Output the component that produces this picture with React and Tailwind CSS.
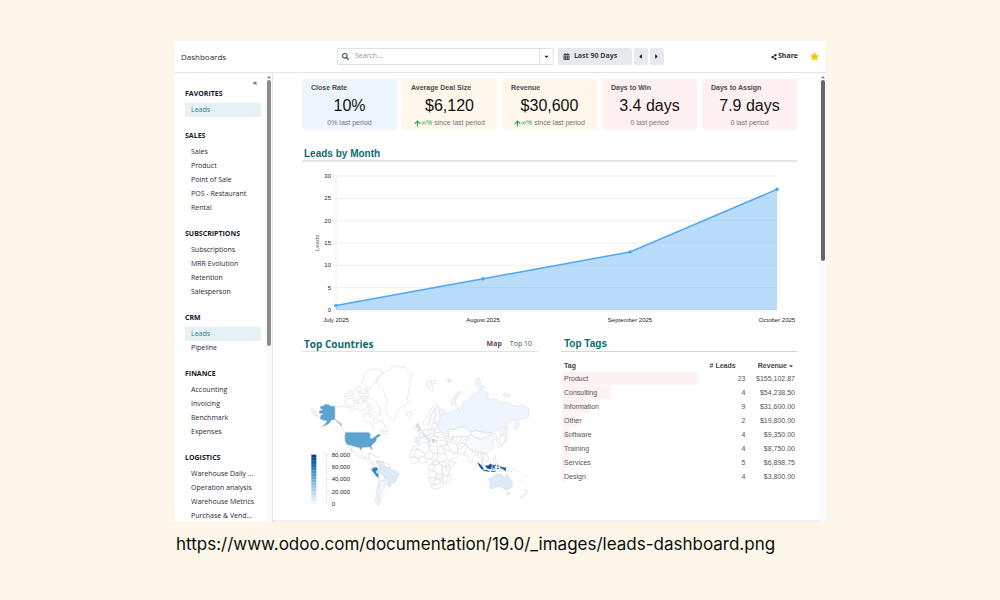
import { FaArrowUp, FaCalendarAlt, FaCaretDown, FaCaretLeft, FaCaretRight, FaCaretUp, FaSearch, FaShareAlt, FaStar } from 'react-icons/fa';
import clsx from 'clsx';

const SECTIONS = [
  { title: 'FAVORITES', items: ['Leads'], active: 'Leads' },
  { title: 'SALES', items: ['Sales', 'Product', 'Point of Sale', 'POS - Restaurant', 'Rental'] },
  { title: 'SUBSCRIPTIONS', items: ['Subscriptions', 'MRR Evolution', 'Retention', 'Salesperson'] },
  { title: 'CRM', items: ['Leads', 'Pipeline'], active: 'Leads' },
  { title: 'FINANCE', items: ['Accounting', 'Invoicing', 'Benchmark', 'Expenses'] },
  { title: 'LOGISTICS', items: ['Warehouse Daily ...', 'Operation analysis', 'Warehouse Metrics', 'Purchase & Vend...'] },
];

const CARDS = [
  { label: 'Close Rate', value: '10%', note: '0% last period', bg: 'bg-[#eef5ff]' },
  { label: 'Average Deal Size', value: '$6,120', note: 'since last period', up: true, bg: 'bg-[#fff6ec]' },
  { label: 'Revenue', value: '$30,600', note: 'since last period', up: true, bg: 'bg-[#fff6ec]' },
  { label: 'Days to Win', value: '3.4 days', note: '0 last period', bg: 'bg-[#fff1f1]' },
  { label: 'Days to Assign', value: '7.9 days', note: '0 last period', bg: 'bg-[#fff1f1]' },
];

const TAGS = [
  { tag: 'Product', leads: 23, revenue: 155102.87 },
  { tag: 'Consulting', leads: 4, revenue: 54238.5 },
  { tag: 'Information', leads: 9, revenue: 31600 },
  { tag: 'Other', leads: 2, revenue: 19800 },
  { tag: 'Software', leads: 4, revenue: 9350 },
  { tag: 'Training', leads: 4, revenue: 8750 },
  { tag: 'Services', leads: 5, revenue: 6898.75 },
  { tag: 'Design', leads: 4, revenue: 3800 },
];

const MONTHS = [
  { label: 'July 2025', x: 34, leads: 1 },
  { label: 'August 2025', x: 181, leads: 7 },
  { label: 'September 2025', x: 328, leads: 13 },
  { label: 'October 2025', x: 475, leads: 27 },
];

const SCALE = [
  '#0a3f86', '#08519c', '#1660a8', '#2070b4', '#2f7fbc', '#4090c5', '#509bcb', '#60a6d1',
  '#75b2d8', '#8abfdd', '#9fcae1', '#b2d2e8', '#c4daee', '#d3e3f3', '#e2edf8', '#f2f7fd',
];

const LEGEND = ['80,000', '60,000', '40,000', '20,000', '0'];

// Countries without revenue, outline only
const OUTLINES = [
  // Canada
  'M105 229L120 232L128 228L137 232L150 233L158 238L170 236L182 243L193 240L199 230L206 227L209 236L204 246L193 252L189 262L191 270L202 276L211 279L214 290L219 297L222 290L219 281L224 273L218 265L228 263L235 269L240 276L246 270L252 284L259 290L252 296L244 299L240 304L247 303L252 306L247 311L241 318L238 312L222 322L214 326L210 322L212 312L205 307L136 307L129 300L124 288L113 275L105 269Z',
  'M246 306L252 309L260 312L266 308L262 300L258 303Z',
  // Canadian arctic
  'M190 150L194 131L206 121L225 117L243 119L249 127L240 134L232 145L224 158L218 170L206 176L197 170L190 164L184 157Z',
  'M134 213L142 203L152 207L162 202L172 208L174 220L166 230L152 228L138 224Z',
  'M146 188L156 183L164 190L156 197L147 196Z',
  'M166 176L177 168L187 176L180 183L168 183Z',
  'M172 190L183 186L192 192L205 188L207 198L194 200L180 199Z',
  'M176 207L186 203L190 214L184 224L176 219Z',
  'M197 206L206 202L217 208L228 218L236 229L243 238L238 246L242 256L232 254L222 245L211 240L220 234L213 224L203 219Z',
  'M202 252L210 247L217 254L211 261Z',
  'M190 206L198 203L195 216L190 214Z',
  'M160 214L167 211L169 219L162 221Z',
  'M192 176L203 178L205 184L194 184Z',
  'M138 190L132 200L141 199Z',
  // Greenland and Iceland
  'M230 151L239 144L244 134L255 124L270 121L274 112L290 107L304 112L317 112L328 122L337 131L336 142L329 149L331 166L325 179L328 190L320 202L325 214L318 226L304 230L295 240L287 250L285 264L280 271L270 263L262 254L257 240L258 226L264 215L257 204L253 192L250 178L240 170L233 162Z',
  'M317 250L325 246L335 248L336 254L326 259L319 256Z',
  // Svalbard
  'M380 156L390 153L394 165L402 170L397 184L389 180L382 168Z',
  'M394 152L409 152L405 161L397 162Z',
  // Mexico and Central America
  'M141 344L150 346L168 351L176 355L184 362L186 375L193 381L202 374L208 375L205 384L199 387L186 383L173 377L165 369L160 362L152 352L158 368L149 357Z',
  'M193 381L202 385L211 388L215 397L222 401L228 398L227 404L219 405L208 397L197 388Z',
  'M205 371L213 370L224 375L218 377Z',
  'M226 378L236 379L233 384L225 382Z',
  // Colombia, Ecuador, Bolivia, Guyanas
  'M221 401L230 392L231 401L239 407L237 418L229 418L220 411Z',
  'M217 412L224 413L219 420L215 418Z',
  'M236 427L246 431L254 440L252 450L241 453L236 443Z',
  'M251 398L266 403L271 411L262 413L253 409Z',
  'M249 452L258 451L263 461L255 463Z',
  // Scandinavia
  'M370 284L370 274L378 265L386 254L392 240L399 229L408 224L417 228L413 235L406 232L398 246L391 259L387 272L385 283L377 288Z',
  'M386 284L390 268L397 252L403 240L407 236L410 246L404 259L400 272L403 279L396 290L392 296Z',
  'M407 236L416 232L417 246L421 261L415 274L405 277L402 268L409 256Z',
  // British Isles, Iberia
  'M343 287L350 284L349 294L342 295Z',
  'M345 321L352 323L352 338L345 337Z',
  // Central Europe
  'M372 301L383 297L387 308L382 318L371 314Z',
  'M386 299L401 298L403 309L393 313L386 308Z',
  'M371 314L382 318L392 313L403 309L402 319L388 323L376 322Z',
  'M402 296L414 292L422 301L418 308L403 309Z',
  'M404 309L419 307L433 312L437 319L425 323L415 321L404 317Z',
  'M397 281L408 279L413 291L402 296L396 290Z',
  'M390 322L402 319L413 321L412 331L402 333L393 329Z',
  'M364 301L371 302L370 309L363 307Z',
  'M402 333L411 331L407 338L402 340Z',
  // Turkey, Caucasus, Middle East
  'M410 334L425 331L441 335L441 344L424 346L411 343Z',
  'M433 326L442 325L456 333L450 339L440 334Z',
  'M423 346L436 345L432 355L424 358Z',
  'M436 345L443 344L452 359L446 363L432 356Z',
  'M441 335L450 337L458 340L470 342L473 356L475 370L461 368L452 359L443 345Z',
  'M423 358L432 356L446 363L457 369L468 374L462 386L445 395L439 386L431 371Z',
  'M457 369L469 371L474 376L462 388',
  // Central and South Asia
  'M444 306L450 297L466 299L479 292L492 291L503 299L515 305L506 318L493 321L479 319L465 321L457 318L456 330L449 322Z',
  'M456 321L466 322L479 332L489 338L481 341L464 334Z',
  'M479 320L493 322L506 319L499 328L488 331Z',
  'M472 341L482 341L490 338L496 342L488 352L482 358L473 356Z',
  'M473 356L482 358L491 348L497 343L502 353L494 366L488 373L475 370Z',
  'M502 351L512 360L523 364L534 366L535 374L524 376L518 388L513 400L507 393L502 379L492 374L494 366Z',
  'M512 358L526 363L525 367L513 363Z',
  'M511 306L524 302L539 305L556 309L570 307L575 314L559 322L544 327L527 322L516 315Z',
  'M534 366L540 364L544 373L548 383L546 390L540 384L535 376Z',
  'M544 371L553 372L559 380L564 391L558 395L550 386L548 379Z',
  'M546 389L550 401L554 410L549 405L544 391Z',
  'M553 372L561 371L565 383L568 390L563 397L556 390',
  'M583 376L588 380L586 388L591 397L585 399L579 388Z',
  'M588 402L593 405L588 409L583 406Z',
  'M539 404L548 402L553 409L548 411Z',
  // Japan and Korea
  'M590 326L599 325L600 336L597 346L592 343Z',
  'M620 319L618 332L614 341L604 347L596 351L606 343L613 333Z',
  'M610 311L620 313L616 320L610 318Z',
  // Africa
  'M340 352L350 344L357 342L354 352L344 359L333 366L333 360Z',
  'M357 342L373 337L385 337L386 347L390 359L376 372L363 363L350 355Z',
  'M385 337L391 337L391 347L387 352Z',
  'M389 347L404 349L413 350L413 371L401 369L389 360Z',
  'M413 350L428 351L436 371L413 371Z',
  'M413 371L436 371L441 383L434 394L419 396L410 389Z',
  'M401 369L413 372L410 389L402 394L393 388L398 378Z',
  'M376 372L389 361L401 369L398 379L393 386L381 386L375 381Z',
  'M350 357L363 364L374 373L371 380L357 384L344 382L343 372Z',
  'M333 366L343 360L350 359L343 372L344 382L331 381L330 373Z',
  'M331 381L344 382L356 385L356 397L345 400L337 396L331 388Z',
  'M356 385L368 381L376 382L380 386L378 397L367 399L356 397Z',
  'M380 386L393 387L401 391L396 402L386 403L379 397Z',
  'M396 402L402 394L411 391L417 399L404 405Z',
  'M417 396L434 395L443 397L449 405L438 410L427 407L419 403Z',
  'M434 394L441 384L448 395L457 398L468 394L463 406L451 416L447 408L449 404Z',
  'M387 404L398 404L406 405L405 414L397 421L388 417L384 411Z',
  'M405 405L419 402L427 407L425 420L427 433L416 433L408 427L397 423L405 414Z',
  'M427 408L438 410L438 420L447 427L446 437L432 436L427 426Z',
  'M438 410L449 407L450 417L445 425L438 420Z',
  'M386 423L398 423L408 427L409 435L405 445L386 443L388 433Z',
  'M409 433L425 433L428 440L417 447L409 445Z',
  'M428 438L446 437L446 448L435 456L437 464L430 461L427 447Z',
  'M386 443L405 445L410 448L402 451L401 466L393 463Z',
  'M402 451L412 447L421 455L413 463L401 463Z',
  'M417 447L428 446L429 455L421 456Z',
  'M393 463L401 466L414 463L424 456L430 461L425 470L414 476L402 478L395 473Z',
  'M446 434L453 437L451 449L443 458L438 456L441 445Z',
  // Papua and New Zealand
  'M617 412L628 414L636 425L626 422L617 422Z',
  'M637 416L646 420M650 423L656 428',
  'M675 477L684 485L679 493L675 488Z',
  'M676 494L668 503L661 503L669 495Z',
  'M666 449L671 454M658 453L662 456M676 438L681 440',
];

// Countries with revenue, shaded by amount
const SHADED = [
  // United States
  ['#5ba3d0', 'M136 307L205 307L212 312L210 322L214 326L222 322L230 315L238 311L241 318L231 324L228 334L220 342L214 349L217 361L212 356L209 351L198 352L187 353L183 361L178 353L168 351L150 346L141 344L135 333L134 318Z'],
  ['#5ba3d0', 'M105 229L92 227L84 223L74 223L70 228L62 228L59 235L68 239L58 242L57 250L69 252L61 257L60 267L69 271L80 273L75 282L64 291L81 285L90 278L94 271L105 269L113 275L119 283L125 290L123 281L114 273L105 268Z'],
  // Brazil and Venezuela
  ['#dce9f6', 'M229 420L238 416L239 407L252 408L262 413L270 411L275 420L288 422L299 431L292 443L288 455L276 460L270 472L261 465L264 457L255 446L253 438L244 431L234 429L228 426Z'],
  ['#dce9f6', 'M230 392L240 392L251 394L251 403L243 407L237 404L231 400Z'],
  // Argentina and Chile
  ['#f0f6fd', 'M240 454L249 452L258 461L252 466L256 474L247 481L246 492L241 501L241 515L234 511L236 490Z'],
  ['#f2f7fd', 'M236 442L240 454L235 480L234 510L241 521L234 528L226 515L229 490L233 466Z'],
  // Peru
  ['#3080bd', 'M215 416L224 412L230 411L235 418L229 423L229 429L236 431L236 443L230 440L222 430L215 421Z'],
  // Russia
  ['#eef5fe', 'M417 241L420 236L433 240L438 249L428 251L431 256L444 249L455 243L467 241L476 230L478 246L486 238L484 224L491 216L502 216L512 201L530 188L543 177L552 184L566 192L559 206L570 207L593 208L600 219L618 216L640 226L655 229L667 224L686 236L686 259L678 264L661 268L651 274L641 270L627 275L622 282L621 303L608 310L604 322L598 321L602 308L594 299L575 307L556 308L539 304L524 301L513 306L502 299L491 291L478 292L465 299L450 297L443 305L446 322L434 320L431 311L419 301L413 291L414 275L421 261Z'],
  ['#eef5fe', 'M453 223L455 209L464 194L483 184L486 187L471 200L465 218L472 227Z'],
  ['#eef5fe', 'M526 149L534 142L542 156L540 168L549 168L553 174L539 177L530 167Z'],
  ['#eef5fe', 'M607 193L619 189L633 196L626 202L613 200Z'],
  ['#eef5fe', 'M655 276L658 287L648 301L642 294L648 281Z'],
  ['#eef5fe', 'M616 291L623 297L621 310L616 302Z'],
  ['#eef5fe', 'M34 236L43 241L53 250L49 254L57 259L47 257L36 248Z'],
  ['#e3edf7', 'M442 150L452 147L454 153L445 157Z'],
  // China
  ['#f5fafe', 'M496 334L507 324L514 315L527 323L544 328L559 322L575 314L571 307L585 310L592 318L586 328L576 332L581 346L577 358L565 367L555 371L545 368L534 365L521 362L511 358L504 350L497 342Z'],
  // France and Spain
  ['#f0f6fd', 'M356 308L365 307L372 312L370 324L360 324L355 317Z'],
  ['#f0f6fd', 'M348 321L365 324L360 334L350 338Z'],
  // Great Britain
  ['#cfe0f1', 'M352 279L356 278L357 288L364 300L352 304L355 295L350 290Z'],
  // Italy and Greece
  ['#d5e5f4', 'M370 314L377 314L382 323L392 331L387 337L383 330L374 322Z'],
  ['#a9cde6', 'M396 328L404 327L402 336L398 337Z'],
  // Australia
  ['#deebf7', 'M566 447L577 441L583 435L593 432L605 431L608 439L616 442L620 430L625 440L635 452L638 462L633 473L623 480L614 478L607 473L601 470L590 471L577 476L568 474L571 463Z'],
  ['#deebf7', 'M621 488L630 489L627 495L622 494Z'],
];

const INDONESIA = [
  'M533 398L539 402L546 409L551 418L545 418L538 408Z',
  'M550 419L561 421L569 424L560 424L550 421Z',
  'M557 406L564 407L572 401L576 405L573 417L564 416L558 412Z',
  'M578 406L588 405L583 409L586 417L581 412L578 420Z',
  'M599 409L606 412L617 413L617 423L609 417L602 415Z',
  'M572 423L588 423L580 425ZM592 405L595 406L594 412ZM590 414L597 414L594 417Z',
];

function SectionTitle({ children, className }) {
  return <h2 className={clsx('text-[10px] font-bold text-[#0c6b72]', className)}>{children}</h2>;
}

function Header() {
  return (
    <header className="flex h-8 items-center border-b border-[#e3e4e8] px-[7px] font-['Open_Sans',sans-serif] text-[#374151]">
      <h1 className="w-[156px] shrink-0 text-[8px] leading-[10px] font-medium text-[#1f2937]">Dashboards</h1>
      <div className="flex h-[17px] w-[34%] items-center rounded-xs border border-[#dfe1e6]">
        <FaSearch size={7} className="ml-1 shrink-0 text-[#374151]" />
        <input
          type="text"
          aria-label="Search"
          placeholder="Search..."
          className="min-w-0 flex-1 pl-1.5 text-[7px] outline-none placeholder:text-[#8f959e]"
        />
        <button type="button" aria-label="Search options" className="flex h-full w-[14px] items-center justify-center border-l border-[#dfe1e6]">
          <FaCaretDown size={7} className="text-[#1f2937]" />
        </button>
      </div>
      <button type="button" className="ml-1 flex h-[17px] w-[74px] items-center gap-1 rounded-xs bg-[#e7e9ed] pl-[5px] text-[7px] font-bold whitespace-nowrap">
        <FaCalendarAlt size={7} />
        Last 90 Days
      </button>
      <button type="button" aria-label="Previous period" className="ml-0.5 flex h-[17px] w-[14px] items-center justify-center rounded-xs bg-[#e7e9ed] text-[#111827]">
        <FaCaretLeft size={7} />
      </button>
      <button type="button" aria-label="Next period" className="ml-0.5 flex h-[17px] w-[14px] items-center justify-center rounded-xs bg-[#e7e9ed] text-[#111827]">
        <FaCaretRight size={7} />
      </button>
      <button type="button" className="ml-auto flex items-center gap-px text-[7px] font-bold text-[#1f2937]">
        <FaShareAlt size={6} />
        Share
      </button>
      <button type="button" aria-label="Favorite" className="ml-3 text-[#f6cb0e]">
        <FaStar size={9} />
      </button>
    </header>
  );
}

function Sidebar() {
  return (
    <aside className="flex w-[99px] shrink-0 border-r border-[#e3e4e8] font-['Open_Sans',sans-serif] text-[7px] leading-[14px]">
      <nav className="min-w-0 flex-1 pr-1 pl-[11px]">
        <button type="button" aria-label="Collapse sidebar" className="mr-1 ml-auto block h-[14px] pt-1 leading-[9px] font-bold text-[#4b5563]">
          «
        </button>
        {SECTIONS.map((section) => (
          <section key={section.title} className="mb-[11px] last:-mb-0.5">
            <h2 className="mb-0.5 font-bold text-[#111827]">{section.title}</h2>
            <ul className="pb-px">
              {section.items.map((item) => (
                <li key={item}>
                  <a
                    href="#"
                    className={clsx(
                      'block pl-1.5 font-medium whitespace-nowrap',
                      item === section.active ? 'bg-[#e5f1f2] text-[#1f858d]' : 'text-[#1f2937]',
                    )}
                  >
                    {item}
                  </a>
                </li>
              ))}
            </ul>
          </section>
        ))}
      </nav>
      <div className="flex w-[7px] flex-col items-center bg-[#fafafa] pt-px">
        <FaCaretUp size={6} className="text-[#7b7b7b]" />
        <div className="h-[266px] w-1 rounded-full bg-[#8b8b8b]" />
      </div>
    </aside>
  );
}

function Card({ label, value, note, up, bg }) {
  return (
    <article className={clsx('h-[51px] rounded-sm pt-1 text-center', bg)}>
      <h3 className="pl-[9px] text-left text-[7px] leading-[10px] font-bold text-[#4b4b4b]">{label}</h3>
      <p className="text-[16px] leading-[25px] text-[#111]">{value}</p>
      <p className="flex items-center justify-center text-[7px] leading-[10px] whitespace-nowrap text-[#757575]">
        {up && (
          <span className="mr-0.5 flex items-center text-[#16a34a]">
            <FaArrowUp size={7} />
            ∞%
          </span>
        )}
        {note}
      </p>
    </article>
  );
}

function LeadsChart() {
  const y = (v) => 148 - (v * 134) / 30;
  const line = MONTHS.map((m) => `${m.x},${y(m.leads)}`).join(' ');
  return (
    <svg viewBox="0 0 495 168" className="block w-full" role="img" aria-label="Leads by month">
      {[0, 5, 10, 15, 20, 25, 30].map((v) => (
        <g key={v}>
          <line x1="31" x2="475" y1={y(v)} y2={y(v)} stroke="#efefef" />
          <text x="29" y={y(v) + 2} textAnchor="end" className="fill-[#222] text-[6px]">{v}</text>
        </g>
      ))}
      <line x1="34" x2="34" y1="14" y2="148" stroke="#efefef" />
      <polygon points={`34,148 ${line} 475,148`} fill="#4ea7f2" fillOpacity="0.4" />
      <polyline points={line} fill="none" stroke="#4ea7f2" strokeWidth="1.5" />
      {MONTHS.map((m) => (
        <g key={m.label}>
          <circle cx={m.x} cy={y(m.leads)} r="1.8" fill="#4ea7f2" />
          <text x={m.x} y="160" textAnchor="middle" className="fill-[#222] text-[6px]">{m.label}</text>
        </g>
      ))}
      <text x="17" y="81" textAnchor="middle" transform="rotate(-90 17 81)" className="fill-[#666] text-[6px]">Leads</text>
    </svg>
  );
}

function CountryMap() {
  return (
    <svg viewBox="6 66 708 480" className="block w-full" role="img" aria-label="Revenue by country">
      <g fill="#fff" stroke="#dcdddd" strokeWidth="2" strokeLinejoin="round">
        {OUTLINES.map((d) => <path key={d} d={d} />)}
      </g>
      <g stroke="#d3dae1" strokeWidth="1.5" strokeLinejoin="round">
        {SHADED.map(([fill, d]) => <path key={d} d={d} fill={fill} />)}
      </g>
      <g fill="#0f55a3" stroke="#0f55a3">
        {INDONESIA.map((d) => <path key={d} d={d} />)}
      </g>
      {SCALE.map((fill, i) => (
        <rect key={fill} x="34" y={374 + i * 9.3} width="15" height="9.3" fill={fill} />
      ))}
      <path d="M70 367L80 374V522" fill="none" stroke="#ddd" strokeWidth="2" />
      {LEGEND.map((label, i) => (
        <g key={label}>
          <line x1="80" x2="89" y1={374 + i * 37} y2={374 + i * 37} stroke="#ddd" strokeWidth="2" />
          <text x="95" y={380 + i * 37} className="fill-[#222] text-[18px]">{label}</text>
        </g>
      ))}
    </svg>
  );
}

function TagsTable() {
  const max = TAGS[0].revenue;
  return (
    <table className="mt-2 w-full table-fixed border-collapse text-[7px] leading-[14px] text-[#555]">
      <thead>
        <tr className="text-[#444]">
          <th className="h-[12px] w-[58%] p-0 pl-[3px] text-left leading-[12px]">Tag</th>
          <th className="w-[21%] p-0 leading-[12px]"># Leads</th>
          <th className="p-0 pr-[3px] leading-[12px]">
            <span className="flex items-center justify-end gap-px">Revenue <FaCaretDown size={6} /></span>
          </th>
        </tr>
      </thead>
      <tbody>
        {TAGS.map((row) => (
          <tr key={row.tag}>
            <td className="p-0 pl-px">
              <div className="mb-px h-[13px] bg-[#fff1f1]" style={{ width: `${(row.revenue / max) * 100}%` }}>
                <span className="pl-0.5">{row.tag}</span>
              </div>
            </td>
            <td className="p-0 pr-0.5 text-right">{row.leads}</td>
            <td className="p-0 pr-0.5 text-right">
              ${row.revenue.toLocaleString('en-US', { minimumFractionDigits: 2 })}
            </td>
          </tr>
        ))}
      </tbody>
    </table>
  );
}

export default function App() {
  return (
    <div className="min-h-screen bg-[#fcf7e8] px-[17.4%] pt-[41px] font-['Liberation_Sans',Arial,sans-serif]">
      <div className="bg-white">
        <Header />
        <div className="flex">
          <Sidebar />
          <main className="min-w-0 flex-1 border-b-2 border-[#f0f0f2] pt-1.5 pr-[23px] pl-[29px]">
            <div className="grid grid-cols-5 gap-[5px]">
              {CARDS.map((card) => <Card key={card.label} {...card} />)}
            </div>
            <section className="mt-[18px]">
              <SectionTitle className="border-b-2 border-[#e6e6e6] pl-0.5 leading-3">Leads by Month</SectionTitle>
              <LeadsChart />
            </section>
            <div className="mt-[7px] grid grid-cols-2 gap-[23px]">
              <section>
                <div className="flex items-center border-b border-[#e0e0e0] pr-1.5 pl-0.5 font-['Open_Sans',sans-serif]">
                  <SectionTitle className="leading-[14px]">Top Countries</SectionTitle>
                  <button type="button" className="mr-2 ml-auto text-[7px] leading-[14px] font-bold text-[#5f4359]">Map</button>
                  <button type="button" className="text-[7px] leading-[14px] font-medium text-[#4b5563]">Top 10</button>
                </div>
                <CountryMap />
              </section>
              <section>
                <SectionTitle className="border-b border-[#d6d6d6] pl-[3px] leading-[14px]">Top Tags</SectionTitle>
                <TagsTable />
              </section>
            </div>
          </main>
          <div className="flex w-1.5 shrink-0 flex-col items-center bg-[#fafafa] pt-px">
            <FaCaretUp size={6} className="text-[#7b7b7b]" />
            <div className="h-[181px] w-1 rounded-full bg-[#666]" />
          </div>
        </div>
      </div>
      <p className="mt-2.5 ml-0.5 font-[Inter,sans-serif] text-[17px] leading-6 whitespace-nowrap text-[#0d0d0d]">
        https://www.odoo.com/documentation/19.0/_images/leads-dashboard.png
      </p>
    </div>
  );
}
